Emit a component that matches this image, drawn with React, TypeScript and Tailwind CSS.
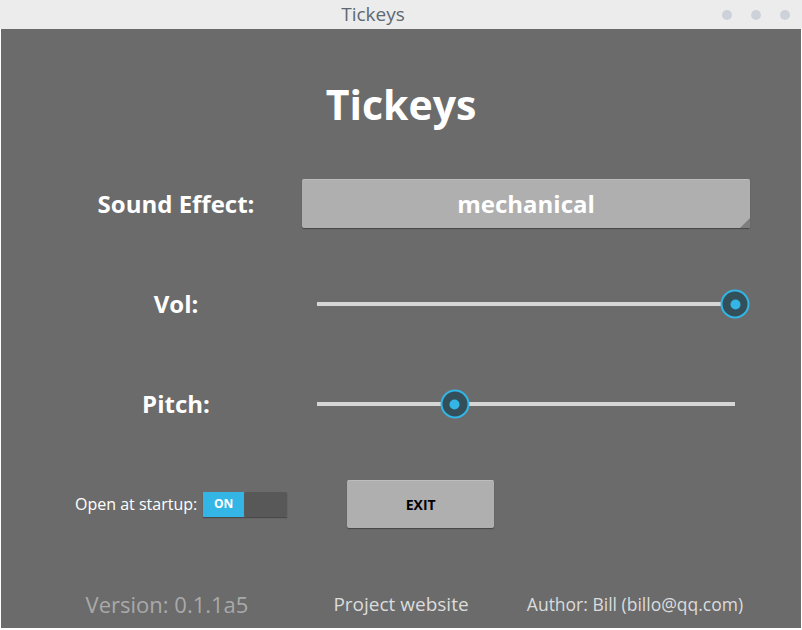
export default function App() {
  return (
    <div className="w-[802px] h-[630px] bg-white font-['Open_Sans',sans-serif] overflow-hidden">
      {/* Title bar */}
      <div className="relative h-[29px] bg-[#ececec] flex items-center justify-center">
        <span className="text-[19px] leading-none text-[#5f6872] mr-[56px]">Tickeys</span>
        <div className="absolute right-[12px] top-[10px] flex gap-[19px]">
          <span className="w-[10px] h-[10px] rounded-full bg-[#cdd1d9]" />
          <span className="w-[10px] h-[10px] rounded-full bg-[#cdd1d9]" />
          <span className="w-[10px] h-[10px] rounded-full bg-[#cdd1d9]" />
        </div>
      </div>

      {/* Body */}
      <div className="mx-px h-[599px] overflow-hidden bg-[#6b6b6b] px-[49px] pt-[25px]">
        <div className="h-[100px] flex items-center justify-center">
          <h1 className="text-[41px] font-bold text-white leading-none">Tickeys</h1>
        </div>

        <div className="h-[100px] flex items-center">
          <div className="w-[252px] text-center text-[24px] font-bold text-white">Sound Effect:</div>
          <button className="relative -mt-[2px] w-[448px] h-[49px] bg-[#afafaf] rounded-[2px] border-t border-[#bdbdbd] shadow-[0_1px_1px_rgba(0,0,0,0.35)] text-[24px] font-bold text-white">
            mechanical
            <span className="absolute right-0 bottom-0 w-0 h-0 border-l-[10px] border-l-transparent border-b-[10px] border-b-[#7d7d7d]" />
          </button>
        </div>

        <div className="h-[100px] flex items-center">
          <div className="w-[252px] text-center text-[24px] font-bold text-white">Vol:</div>
          <Slider percent={100} />
        </div>

        <div className="h-[100px] flex items-center">
          <div className="w-[252px] text-center text-[24px] font-bold text-white">Pitch:</div>
          <Slider percent={33} />
        </div>

        <div className="h-[100px] flex items-center">
          <span className="ml-[25px] text-[16px] text-white">Open at startup:</span>
          <div className="ml-[6px] flex h-[25px] w-[84px] shadow-[0_1px_1px_rgba(0,0,0,0.3)]">
            <div className="w-[41px] bg-[#33b5e5] flex items-center justify-center text-[12px] font-bold text-white">ON</div>
            <div className="flex-1 bg-[#585858] rounded-[2px]" />
          </div>
          <button className="ml-[60px] w-[147px] h-[48px] bg-[#afafaf] rounded-[2px] border-t border-[#bdbdbd] shadow-[0_1px_1px_rgba(0,0,0,0.35)] text-[14px] font-bold text-black">
            EXIT
          </button>
        </div>

        <div className="h-[100px] grid grid-cols-3 items-center text-center">
          <span className="text-[22px] text-[#a9a9a9]">Version: 0.1.1a5</span>
          <span className="text-[19px] text-[#dcdcdc]">Project website</span>
          <span className="text-[17.5px] text-[#dcdcdc]">Author: Bill (billo@qq.com)</span>
        </div>
      </div>
    </div>
  );
}

function Slider({ percent }: { percent: number }) {
  return (
    <div className="w-[448px] px-[15px]">
      <div className="relative h-[4px] bg-[#d6d6d6]">
        <div
          className="absolute top-1/2 w-[29px] h-[29px] -translate-x-1/2 -translate-y-1/2 rounded-full bg-[#33505a] border-2 border-[#33b5e5] flex items-center justify-center"
          style={{ left: `${percent}%` }}
        >
          <span className="w-[10px] h-[10px] rounded-full bg-[#33b5e5]" />
        </div>
      </div>
    </div>
  );
}
